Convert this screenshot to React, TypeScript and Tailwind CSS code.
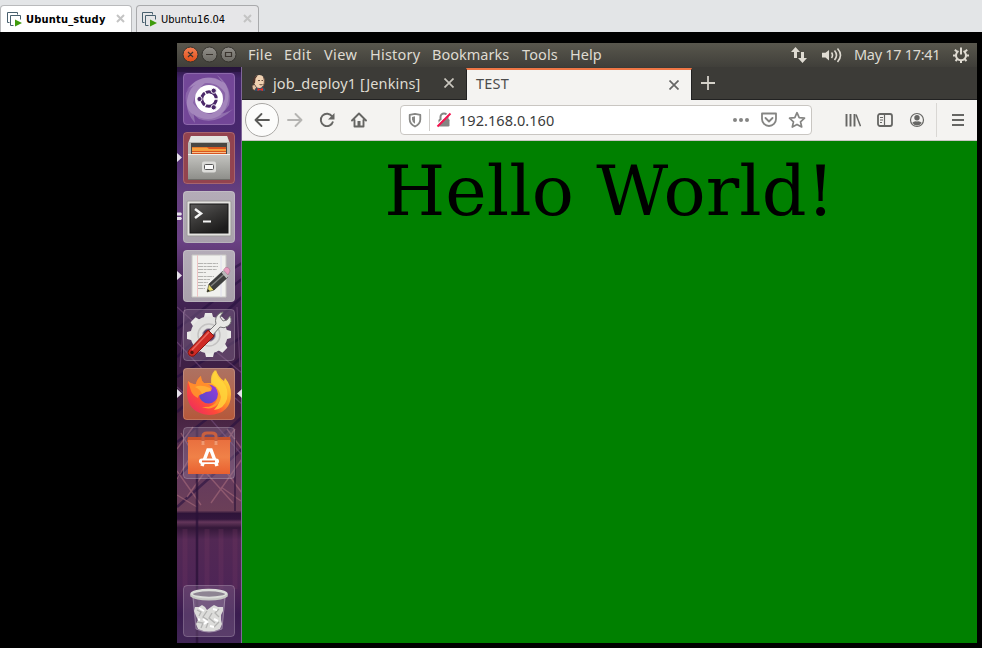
import React from "react";

const ui = "font-['Noto_Sans','Open_Sans',sans-serif]";

function HostTab({ label, active }: { label: string; active?: boolean }) {
  return (
    <div
      className={
        "flex h-[27px] items-center rounded-t-[4px] border border-b-0 " +
        (active ? "w-[132px] border-[#b9babc] bg-white pl-[6px]" : "w-[123px] border-[#a9aaac] bg-[#e6e6e8] pl-[5px]")
      }
    >
      <svg width="15" height="15" viewBox="0 0 15 15" className="shrink-0">
        <path d="M2.500 10.500H.5V.5h10v2M3.500 3.500h10v4M3.500 3.500v10h3" fill="none" stroke="#48606e" />
        <path d="M8 7.500v7l7-3.500z" fill="#3f9b0b" />
      </svg>
      <span
        className={
          "ml-[4px] whitespace-nowrap text-[11px] leading-none text-black font-['DejaVu_Sans_Condensed','DejaVu_Sans',sans-serif] " +
          (active ? "w-[90px] font-bold tracking-[0.2px]" : "w-[82px] tracking-[-0.05px]")
        }
      >
        {label}
      </span>
      <svg width="9" height="9" viewBox="0 0 9 9" className="mb-[2px] shrink-0">
        <path d="M1 1l7 7M8 1L1 8" stroke="#c4c4c4" strokeWidth="2" />
      </svg>
    </div>
  );
}

function WindowButtons() {
  return (
    <svg width="64" height="24" viewBox="0 0 64 24" className="shrink-0">
      <defs>
        <linearGradient id="wc" x2="0" y2="1"><stop stopColor="#f58256" /><stop offset="1" stopColor="#df4c16" /></linearGradient>
        <linearGradient id="wg" x2="0" y2="1"><stop stopColor="#92908a" /><stop offset="1" stopColor="#6b6963" /></linearGradient>
      </defs>
      <circle cx="13.500" cy="11.500" r="7.500" fill="url(#wc)" stroke="#35332e" />
      <circle cx="32.500" cy="11.500" r="7.500" fill="url(#wg)" stroke="#35332e" />
      <circle cx="51.500" cy="11.500" r="7.500" fill="url(#wg)" stroke="#35332e" />
      <path d="M11 9l5 5M16 9l-5 5M29 11.500h7M48.500 9.500h6v4h-6z" fill="none" stroke="#3a342e" strokeWidth="1.200" />
    </svg>
  );
}

const menus: [string, string][] = [
  ["File", "w-[36px] tracking-[0.3px]"],
  ["Edit", "w-[40px] tracking-[0.4px]"],
  ["View", "w-[46px] tracking-[0.4px]"],
  ["History", "w-[62px] tracking-[0.2px]"],
  ["Bookmarks", "w-[90px]"],
  ["Tools", "w-[48px] tracking-[0.1px]"],
  ["Help", "w-[40px]"],
];

function TopPanel() {
  return (
    <div className="flex h-[24px] shrink-0 items-center bg-gradient-to-b from-[#59574d] to-[#403f3a] text-[14.5px] text-[#dfdbd2]">
      <WindowButtons />
      <div className="flex flex-1 pb-[2px] pl-[7px] leading-[22px]">
        {menus.map(([m, w]) => (
          <span key={m} className={w + " whitespace-nowrap"}>{m}</span>
        ))}
      </div>
      <svg width="18" height="18" viewBox="0 0 18 18" className="mr-[13px]">
        <path d="M5.500 1L1 6h3v6h3V6h3zM12.500 17l-4.500-5h3V6h3v6h3z" fill="#dfdbd2" />
      </svg>
      <svg width="22" height="18" viewBox="0 0 22 18" className="mr-[11px]">
        <path d="M1 6.800h3.500L8 4v10.500l-3.500-3H1z" fill="#dfdbd2" />
        <path d="M10.500 6.500q2 2.700 0 5.500M13.500 4.500q4 4.800 0 9.500M16.500 2.500q6 6.700 0 13.500" fill="none" stroke="#dfdbd2" strokeWidth="1.600" />
      </svg>
      <span className="w-[98px] whitespace-nowrap pb-[2px] leading-[22px] tracking-[-0.3px]">May 17 17:41</span>
      <svg width="18" height="18" viewBox="0 0 18 18" className="mr-[7px]" fill="none" stroke="#dfdbd2" strokeWidth="2">
        <path d="M6.500 5A5 5 0 1 0 11.500 5" />
        <path d="M9 1.500v7" />
        <path d="M1 9.500h3M14 9.500h3M9 14v3M2.800 3.800l2.400 2M15.200 3.800l-2.400 2M3.500 15l2.200-2.200M14.500 15l-2.200-2.200" />
      </svg>
    </div>
  );
}

function Wallpaper() {
  return (
    <svg className="absolute inset-0" width="65" height="576" viewBox="0 0 65 576">
      <defs>
        <linearGradient id="wall" x2="0" y2="1">
          <stop stopColor="#2b1642" />
          <stop offset=".02" stopColor="#43256a" />
          <stop offset=".12" stopColor="#48286e" />
          <stop offset=".22" stopColor="#65407f" />
          <stop offset=".3" stopColor="#6b4285" />
          <stop offset=".37" stopColor="#4c2a5c" />
          <stop offset=".44" stopColor="#3a1f4c" />
          <stop offset=".6" stopColor="#44213f" />
          <stop offset=".7" stopColor="#643a5e" />
          <stop offset=".77" stopColor="#6b3f58" />
          <stop offset=".775" stopColor="#2e1439" />
          <stop offset=".785" stopColor="#33173d" />
          <stop offset=".79" stopColor="#63365a" />
          <stop offset=".8" stopColor="#341839" />
          <stop offset=".82" stopColor="#522854" />
          <stop offset=".9" stopColor="#4e2556" />
          <stop offset=".95" stopColor="#3a1c50" />
          <stop offset="1" stopColor="#412656" />
        </linearGradient>
      </defs>
      <rect width="65" height="576" fill="url(#wall)" />
      <g fill="none">
        <path d="M30 218l35-22M0 262l65-50M0 290l65-60M0 310l65-40M0 345l65-55M0 375l65-50M0 410l65-60M0 440l65-58" stroke="#26113f" strokeWidth="2.500" opacity=".6" />
        <path d="M0 240l20 18 16 24 29 24M0 275l28 30 37 32M0 320l30 28 35 40M8 240L3 300M60 240l3 60" stroke="#76507f" strokeWidth="1.200" opacity=".6" />
        <path d="M0 382l16-22M0 412l28-46M10 430l48-68M34 436l31-44M4 366l20 34 32 36M28 376l37 50M0 404l24 34M50 362l15 20M0 428l20 12M44 420l20 14" stroke="#a3687a" strokeWidth="1.400" opacity=".65" />
        <path d="M20 360v216" stroke="#2a1238" strokeWidth="2.500" opacity=".75" />
        <path d="M58 372v72" stroke="#2a1238" strokeWidth="2" opacity=".6" />
        <path d="M8 462v58M30 462v60M44 462v60M58 462v60" stroke="#7b3b62" opacity=".22" strokeWidth="5" />
      </g>
      <rect width="65" height="5" fill="#1d1030" opacity=".5" />
      <path d="M64.500 0v576" stroke="#806798" />
    </svg>
  );
}

function DashIcon() {
  return (
    <g>
      <path d="M3 20Q16-4 42 10Q50 24 40 40Q26 52 8 40Q1 32 3 20z" fill="#a98abf" opacity=".45" />
      <g fill="#fff" opacity=".22">
        <path d="M3 18Q14 2 32 5Q44 9 45 25Q38 10 24 10Q10 10 3 18z" />
        <path d="M34 2Q50 14 46 32Q38 46 22 44Q38 38 42 26Q44 14 34 2z" />
        <path d="M50 36Q34 52 16 46Q4 38 6 22Q12 38 26 41Q40 43 50 36z" />
        <path d="M12 50Q-2 34 8 16Q14 8 24 8Q12 18 10 30Q10 40 12 50z" />
      </g>
      <circle cx="26" cy="26" r="14" fill="#fff" />
      <circle cx="26" cy="26" r="7.200" fill="none" stroke="#4b2769" strokeWidth="3.200" />
      <path d="M26 26l10.500 0M26 26l-5.500 9.500M26 26l-5.500-9.500" stroke="#fff" strokeWidth="1.300" />
      <circle cx="26" cy="26" r="5.500" fill="#fff" />
      {[[16.500, 26], [30.700, 17.700], [30.700, 34.300]].map(([x, y]) => (
        <circle key={x + "-" + y} cx={x} cy={y} r="2.600" fill="#4b2769" stroke="#fff" strokeWidth=".9" />
      ))}
    </g>
  );
}

function FilesIcon() {
  return (
    <g>
      <path d="M8 4h36l3 7v34H5V11z" fill="#b9b9b5" />
      <path d="M8 4h36l2 6H6z" fill="#e4e4e1" />
      <path d="M8 11h36v12H8z" fill="#4a4743" />
      <path d="M9 15h34v8H9z" fill="#d9551f" />
      <path d="M9 15.500h15l2 1.500h17v2H9z" fill="#f6a03c" />
      <path d="M9 20.500h34" stroke="#f5c08a" />
      <path d="M5 22h42v25H5z" fill="url(#metal)" />
      <path d="M5 22.500h42" stroke="#efefec" />
      <rect x="19" y="29.500" width="14" height="11" rx="2" fill="#dcdcd9" />
      <rect x="21.500" y="32.500" width="9" height="5" rx="1" fill="#fafafa" stroke="#555" />
      <path d="M5 47.500h42" stroke="#6f6e6a" />
    </g>
  );
}

function TerminalIcon() {
  return (
    <g>
      <rect x="4" y="10" width="44" height="35" rx="1" fill="#e4e3e0" stroke="#9b9a98" />
      <rect x="7" y="13" width="38" height="29" fill="url(#screen)" stroke="#161616" />
      <path d="M12 18l6 4.500-6 4.500" fill="none" stroke="#f4f4f4" strokeWidth="2.500" />
      <path d="M20 30.500h8" stroke="#f4f4f4" strokeWidth="2" />
    </g>
  );
}

function TextEditorIcon() {
  return (
    <g>
      <path d="M9 5h34v42H9z" fill="#f1f1ee" stroke="#c8c7c4" />
      <path d="M14.500 5v42" stroke="#eec4c4" />
      <path d="M38 5v42" stroke="#dedeee" />
      <path d="M15 13.500h20M15 16.500h20M15 19.500h19M15 22.500h8M15 26.500h16M15 29.500h12M15 32.500h10M15 35.500h8M15 38.500h7" stroke="#b4b4b1" strokeDasharray="5 .6 3 .6" />
      <path d="M24 42l2-8 5 6z" fill="#e8dc6c" stroke="#555535" strokeWidth=".7" />
      <path d="M24 42l.8-3 2 2z" fill="#222" />
      <path d="M26 34l14-13 5 6-14 13z" fill="#3d3e3d" stroke="#222" strokeWidth=".6" />
      <path d="M28 36l14-12.500" stroke="#81827f" strokeWidth="1.300" />
      <path d="M38.500 22.500l2.500-2.500 5 5.500-2.500 3z" fill="#b9b9b9" />
      <path d="M40.500 20l2-2.500q3.500-1 4.500 3.500l-2 4z" fill="#e79cc0" stroke="#a36a86" strokeWidth=".5" />
    </g>
  );
}

function SettingsIcon() {
  const teeth = [0, 45, 90, 135, 180, 225, 270, 315];
  return (
    <g>
      <g fill="#e9e9e7">
        {teeth.map((a) => (
          <path key={a} d="M20.500 10l1.500-6h7l1.500 6z" transform={`rotate(${a} 26 26)`} />
        ))}
      </g>
      <circle cx="26" cy="26" r="12.500" fill="none" stroke="#e2e2e0" strokeWidth="12" />
      <circle cx="26" cy="26" r="11" fill="none" stroke="#c4c3c2" strokeWidth="1.500" />
      <circle cx="26" cy="26" r="6.500" fill="none" stroke="#b4a9b6" />
      <path d="M25 23l8-8q-2-7 4-11l3-1-3 5 3 4 4-1 3-4q3 6-2 10-4 3-8 1l-8 9z" fill="#e8e8e5" stroke="#777" />
      <path d="M25 21l6 6-20 20q-3 1-5-1t0-5z" fill="#cf2a24" stroke="#861712" />
      <path d="M26 23L9 41" stroke="#e9665c" strokeWidth="1.500" />
      <circle cx="9" cy="43.500" r="1.700" fill="#591411" />
    </g>
  );
}

function FirefoxIcon() {
  return (
    <g>
      <path d="M5 13q4 4 8 3 1-5 5-8 0 5 3 7l8 0q-1-8 4-13 2 7 8 11l1-3q6 7 6 16 0 20-22 21Q4 45 4 24 4 17 5 13z" fill="url(#ff)" />
      <path d="M28 15q-1-8 4-13 2 8 8 12 6 7 4 17-3 10-13 11 8-8 5-18-2-6-8-9z" fill="#ffd83c" opacity=".8" />
      <circle cx="25.500" cy="26" r="9.500" fill="url(#ffp)" />
      <path d="M5 13q4 4 8 3 1-5 5-8 0 5 3 7 5 0 8 5l-1 3q-5 0-9 3-4 1-4 4-5-2-7-7z" fill="#ff8d2d" />
      <path d="M12 19q6-3 15 1l1 3q-5 0-9 3-2-5-7-7z" fill="#ffad35" />
      <path d="M34 20q7 9 1 16-7 7-16 3 12 1 15-7 2-6 0-12z" fill="#ff9a2b" />
    </g>
  );
}

function SoftwareIcon() {
  return (
    <g>
      <path d="M5 10h42l1 5H4z" fill="#c9542c" />
      <path d="M5 13h42v34H5z" fill="url(#bag)" />
      <path d="M20 17V9q0-3 4-3h5q4 0 4 3v8" fill="none" stroke="#c9603f" strokeWidth="3" />
      <path d="M18.500 14h3v4h-3zM31.500 14h3v4h-3z" fill="#f19a70" />
      <path d="M19 39l6-16h3l6 16" fill="none" stroke="#fff" strokeWidth="3.500" />
      <rect x="16" y="31.500" width="20" height="5.500" rx="2.700" fill="#fff" />
      <path d="M19 34.300h13" stroke="#eb6737" strokeWidth="1.700" />
    </g>
  );
}

function TrashIcon() {
  return (
    <g>
      <path d="M9 9l4 35q13 7 26 0l4-35z" fill="#d5c9dc" opacity=".22" />
      <path d="M10 12l3 32q13 6 26 0l3-32" fill="none" stroke="#b9adbf" opacity=".55" />
      <path d="M12 22l4 0 3-2 3 2 2 3 4-3 3-2 4 2 5 0 0 4-2 4 0 5 1 4-2 5q-11 5-22 0l-2-5 2-4-2-4-2-5z" fill="#dcdcda" />
      <path d="M14 25l4 2-2 4M24 26l-4 6 5 3M36 24l-4 4 4 4M29 28l-3 5 6 5M14 37l6 1-2 5M25 38l-2 5M36 37l-5 5" fill="none" stroke="#b3b3b2" strokeWidth="1.300" />
      <path d="M16 23l5 3M30 24l4 1M20 34l4 3-3 2M31 34l4 2M27 41l4 1M15 34l2 1" fill="none" stroke="#fff" strokeWidth="2" />
      <ellipse cx="26" cy="9" rx="17.500" ry="4" fill="#8e8593" stroke="#dcdeda" strokeWidth="2.500" />
      <path d="M7.300 9v2.500Q12 15.500 26 15.500t18.700-4V9Q40 13.500 26 13.500T7.300 9z" fill="#c5c8c3" />
    </g>
  );
}

interface TileProps {
  tone: string;
  marks?: "one" | "two" | "both";
  children: React.ReactNode;
}

function Tile({ tone, marks, children }: TileProps) {
  return (
    <div className="relative flex h-[52px] w-[65px] shrink-0 pl-[6px]">
      <svg width="52" height="52" viewBox="0 0 52 52" className={"rounded-[4px] " + tone}>
        {children}
        <rect x=".5" y=".5" width="51" height="51" rx="3.500" fill="none" stroke="#fff" strokeOpacity=".18" />
      </svg>
      {marks && (
        <svg className="absolute left-0 top-0" width="65" height="52" viewBox="0 0 65 52">
          {marks === "two" ? (
            <path d="M0 21.500h4l1 1.500-1 1.500H0zM0 26h4l1 1.500-1 1.500H0z" fill="#e5e0e9" />
          ) : (
            <path d="M0 21l5 4.500L0 30z" fill="#e5e0e9" />
          )}
          {marks === "both" && <path d="M65 21l-5 4.500 5 4.500z" fill="#e5e0e9" />}
        </svg>
      )}
    </div>
  );
}

function Launcher() {
  return (
    <aside className="relative h-[576px] w-[65px] shrink-0 overflow-hidden">
      <Wallpaper />
      <svg className="absolute" width="0" height="0">
        <defs>
          <linearGradient id="metal" x2="0" y2="1"><stop stopColor="#c5c5c1" /><stop offset="1" stopColor="#8f8f8b" /></linearGradient>
          <linearGradient id="screen" x2=".6" y2="1"><stop stopColor="#5a5958" /><stop offset=".6" stopColor="#343332" /><stop offset="1" stopColor="#1d1c1c" /></linearGradient>
          <linearGradient id="ff" x1=".9" y1=".1" x2=".15" y2=".9"><stop stopColor="#ffdf3e" /><stop offset=".4" stopColor="#ff9b28" /><stop offset=".7" stopColor="#ff4b38" /><stop offset="1" stopColor="#f0305a" /></linearGradient>
          <linearGradient id="ffp" x1="1" x2="0" y2="1"><stop stopColor="#9a3bdc" /><stop offset="1" stopColor="#5049c6" /></linearGradient>
          <linearGradient id="bag" x2="0" y2="1"><stop stopColor="#e9703f" /><stop offset=".5" stopColor="#f08148" /><stop offset="1" stopColor="#e9602f" /></linearGradient>
        </defs>
      </svg>
      <div className="relative flex h-full flex-col gap-[7px] pb-[6px] pt-[6px]">
        <Tile tone="bg-[#734798]"><DashIcon /></Tile>
        <Tile tone="bg-[#93434f]" marks="one"><FilesIcon /></Tile>
        <Tile tone="bg-gradient-to-b from-[#b4acb8] to-[#a8a0ab]" marks="two"><TerminalIcon /></Tile>
        <Tile tone="bg-gradient-to-b from-[#b4acb8] to-[#a8a0ab]" marks="one"><TextEditorIcon /></Tile>
        <Tile tone="bg-[#9b829e]/35"><SettingsIcon /></Tile>
        <Tile tone="bg-gradient-to-b from-[#ad7262] to-[#b5583a]" marks="both"><FirefoxIcon /></Tile>
        <Tile tone="bg-[#9b829e]/35"><SoftwareIcon /></Tile>
        <div className="flex-1" />
        <Tile tone="bg-[#8d7196]/35"><TrashIcon /></Tile>
      </div>
    </aside>
  );
}

function CloseX({ color }: { color: string }) {
  return (
    <svg width="10" height="10" viewBox="0 0 10 10" className="shrink-0">
      <path d="M.5.5l9 9M9.500.5l-9 9" stroke={color} strokeWidth="1.700" />
    </svg>
  );
}

function JenkinsIcon() {
  return (
    <svg width="16" height="16" viewBox="0 0 16 16" className="mb-px shrink-0">
      <path d="M3.500 14l1.500-3h6l3 3v2H3.500z" fill="#31516b" />
      <path d="M3.500 5q0-5 5-5 5 0 5 6.500 0 6.500-5 6.500-4 0-4.500-3L2.500 7z" fill="#f0d2b2" />
      <path d="M2 9Q1 2 7 0L4.500 3.500 4 8z" fill="#50352b" />
      <path d="M12.500 2q2.500 7-2 10.500" fill="none" stroke="#65483b" strokeWidth=".9" />
      <path d="M7 5.500h2M10.500 5.500h1.500M8.500 9.500q1.500.7 3 0" fill="none" stroke="#553b32" strokeWidth=".9" />
      <path d="M1 10.500l2.500-1 2 3-2 3-2-1.500z" fill="#e3c4a3" stroke="#553b32" strokeWidth=".7" />
      <path d="M6.500 13l2.500 1 3-1v3l-3-1-2.500 1z" fill="#e32f26" />
    </svg>
  );
}

function TabStrip() {
  return (
    <div className="flex h-[33px] shrink-0 border-b border-[#222] bg-[#3c3b37] text-[14.5px]">
      <div className="flex w-[224px] items-center pl-[9px] text-[#dfdbd2]">
        <JenkinsIcon />
        <span className="ml-[6px] w-[171px] whitespace-nowrap leading-[32px] tracking-[0.12px]">job_deploy1 [Jenkins]</span>
        <CloseX color="#c9c6be" />
      </div>
      <div className="mt-px flex h-[32px] w-[226px] items-center border-l border-r border-t-2 border-l-[#222] border-r-[#222] border-t-[#f07746] bg-[#f4f3f1] pl-[9px] text-[#4c4c4c]">
        <span className="w-[193px] pb-[2px] tracking-[0.25px]">TEST</span>
        <CloseX color="#666" />
      </div>
      <svg width="14" height="14" viewBox="0 0 14 14" className="ml-[9px] mt-[9px]">
        <path d="M7 0v14M0 7h14" stroke="#d4d1c9" strokeWidth="1.800" />
      </svg>
    </div>
  );
}

function Cell({ children }: { children: React.ReactNode }) {
  return (
    <div className="flex w-[32px] shrink-0 items-center justify-center">
      <svg width="16" height="16" viewBox="0 0 16 16" fill="none" stroke="#666664" strokeWidth="1.900">{children}</svg>
    </div>
  );
}

function Toolbar() {
  return (
    <div className="flex h-[41px] shrink-0 items-center border-b border-[#c8c6c3] bg-[#f4f3f1] pl-[3px]">
      <div className="flex h-[34px] w-[34px] shrink-0 items-center justify-center rounded-full border border-[#a9a7a4] bg-[#fcfcfb]">
        <svg width="16" height="16" viewBox="0 0 16 16" fill="none" stroke="#5a5a58" strokeWidth="1.800" strokeLinecap="round" strokeLinejoin="round">
          <path d="M15 8H1.500M7.500 2l-6 6 6 6" />
        </svg>
      </div>
      <Cell><path d="M1 8h13.500M8.500 2l6 6-6 6" stroke="#b5b4b2" strokeLinecap="round" strokeLinejoin="round" /></Cell>
      <Cell>
        <path d="M13.200 4.500A6.200 6.200 0 1 0 14 9.500" />
        <path d="M15.500 1v6.500H9z" fill="#666664" stroke="none" />
      </Cell>
      <Cell>
        <path d="M1 8.500L8 1.500l7 7M3.500 8v6.500h9V8" strokeLinecap="round" strokeLinejoin="round" />
        <path d="M6.500 14V9h3v5z" fill="#666664" stroke="none" />
      </Cell>
      <div className="ml-[25px] flex h-[30px] w-[412px] shrink-0 items-center rounded-[4px] border border-[#c9c6c2] bg-white pl-[6px]">
        <svg width="16" height="16" viewBox="0 0 16 16" fill="none" stroke="#868684">
          <path d="M8 1.800l5.300 1.100v4.600q0 4.300-5.300 7-5.300-2.700-5.300-7V2.900z" strokeWidth="1.800" strokeLinejoin="round" />
          <path d="M8 4.300v7.500Q5 10 5 7.300V5z" fill="#868684" stroke="none" />
        </svg>
        <div className="ml-[6px] h-[22px] w-px bg-[#cfcdca]" />
        <svg width="16" height="16" viewBox="0 0 16 16" className="ml-[6px]" fill="none">
          <path d="M4.500 7V5a3.500 3.500 0 0 1 7 0v2" stroke="#858583" strokeWidth="2" />
          <rect x="2.500" y="7" width="11" height="7.500" rx="1.200" fill="#858583" />
          <path d="M0 14L14 0" stroke="#fff" strokeWidth="1.500" />
          <path d="M1.500 14.500L14.500 1.500" stroke="#f5134f" strokeWidth="2" />
        </svg>
        <span className="ml-[7px] flex-1 whitespace-nowrap text-[14.5px] leading-none tracking-[0.05px] text-[#3b3b3b]">192.168.0.160</span>
        <svg width="16" height="16" viewBox="0 0 16 16" fill="#858583">
          <circle cx="2" cy="8" r="2" /><circle cx="8" cy="8" r="2" /><circle cx="14" cy="8" r="2" />
        </svg>
        <svg width="18" height="16" viewBox="0 0 18 16" className="ml-[11px]" fill="none" stroke="#858583" strokeWidth="1.800" strokeLinecap="round" strokeLinejoin="round">
          <path d="M2 1.500h14v5.500a7 7 0 0 1-14 0zM5.500 6L9 9.500 12.500 6" />
        </svg>
        <svg width="18" height="18" viewBox="0 0 18 18" className="ml-[10px] mr-[5px]" fill="none" stroke="#858583" strokeWidth="1.700" strokeLinejoin="round">
          <path d="M9 1.700l2.200 4.900 5.300.6-4 3.600 1.200 5.200L9 13.400l-4.700 2.600 1.200-5.200-4-3.600 5.300-.6z" />
        </svg>
      </div>
      <div className="w-[25px] shrink-0" />
      <Cell><path d="M1.500 2v12.500M5.500 2v12.500M9.500 2v12.500" /><path d="M11 2.500L15.500 14.300" strokeWidth="1.500" /></Cell>
      <Cell>
        <rect x="1" y="2" width="14" height="12" rx="2" strokeWidth="1.800" />
        <path d="M7.500 2v12M3 5.500h3M3 8h3M3 10.500h2" strokeWidth="1.200" />
      </Cell>
      <Cell>
        <circle cx="8" cy="8" r="6.500" strokeWidth="1.200" />
        <circle cx="8" cy="5.800" r="2.700" fill="#666664" stroke="none" />
        <path d="M3.300 10.800Q5 8.800 8 9.400q3-.6 4.700 1.400Q11 13.500 8 13.500t-4.700-2.700z" fill="#666664" stroke="none" />
      </Cell>
      <div className="ml-[3px] mr-[5px] h-[34px] w-px shrink-0 bg-[#d9d7d4]" />
      <Cell><path d="M2 3h12M2 8h12M2 13h12" /></Cell>
    </div>
  );
}

export default function App() {
  return (
    <div className={"h-[648px] w-[982px] overflow-hidden bg-black " + ui}>
      <div className="flex h-[32px] items-end gap-[4px] bg-[#e3e5e7]">
        <HostTab label="Ubuntu_study" active />
        <HostTab label="Ubuntu16.04" />
      </div>
      <div className="ml-[177px] mt-[11px] flex h-[600px] w-[800px] flex-col">
        <TopPanel />
        <div className="flex h-[576px]">
          <Launcher />
          <main className="flex flex-1 flex-col">
            <TabStrip />
            <Toolbar />
            <div className="flex-1 bg-[#008000] pt-[9px] text-center font-['DejaVu_Serif',serif] text-[70px] leading-[82px] tracking-[0.06px] text-black">
              Hello World!
            </div>
          </main>
        </div>
      </div>
    </div>
  );
}
